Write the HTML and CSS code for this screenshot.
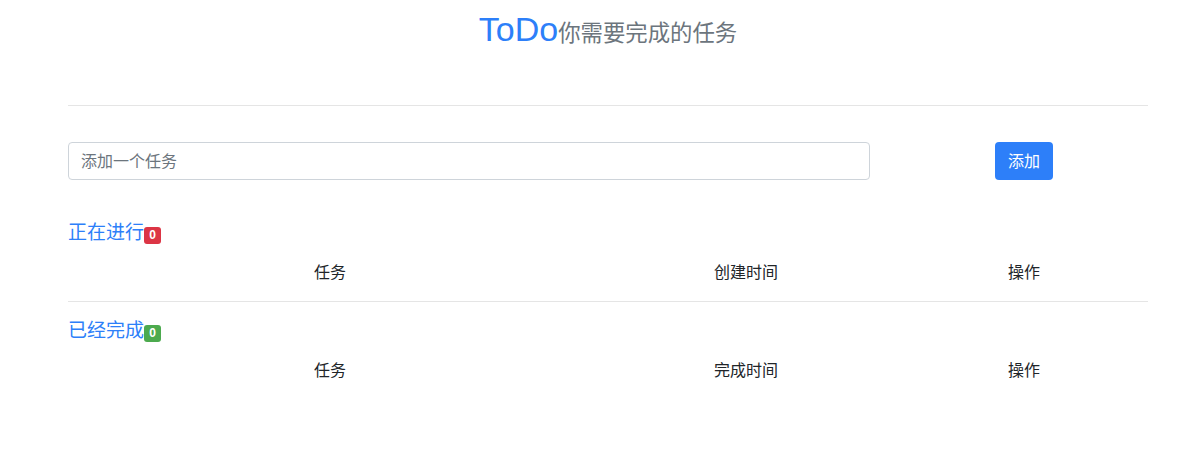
FILE: index.html
```html
<!DOCTYPE html>
<html lang="zh">
<head>
<meta charset="utf-8">
<title>ToDo</title>
<link rel="stylesheet" href="styles.css">
</head>
<body>
<div class="app">
  <header class="header">
    <h1 class="title"><span class="brand">ToDo</span><small class="subtitle">你需要完成的任务</small></h1>
  </header>
  <div class="add-row">
    <input class="task-input" type="text" placeholder="添加一个任务">
    <button class="add-btn" type="button">添加</button>
  </div>
  <section class="section section-doing">
    <h5 class="section-title">正在进行<span class="badge badge-red">0</span></h5>
    <div class="table-head">
      <div class="th">任务</div>
      <div class="th">创建时间</div>
      <div class="th">操作</div>
    </div>
  </section>
  <section class="section section-done">
    <h5 class="section-title">已经完成<span class="badge badge-green">0</span></h5>
    <div class="table-head">
      <div class="th">任务</div>
      <div class="th">完成时间</div>
      <div class="th">操作</div>
    </div>
  </section>
</div>
</body>
</html>
```
FILE: styles.css
```css
* { box-sizing: border-box; }
body {
  margin: 0;
  background: #fff;
  font-family: "Liberation Sans", "Noto Sans CJK SC", sans-serif;
  color: #212529;
}
.app {
  margin-left: 68px;
  width: 1080px;
}
.header {
  height: 106px;
  padding-top: 10px;
  border-bottom: 1px solid #e5e5e5;
}
.title {
  margin: 0;
  text-align: center;
  font-weight: normal;
  line-height: 38px;
  font-size: 34px;
}
.brand {
  color: #2d7ff9;
  font-family: "Liberation Sans", sans-serif;
  font-size: 34px;
}
.subtitle {
  color: #6c757d;
  font-size: 22.4px;
  font-family: "Noto Sans CJK SC", sans-serif;
}
.add-row {
  margin-top: 36px;
  display: grid;
  grid-template-columns: 802px 1fr;
  align-items: center;
}
.task-input {
  height: 38px;
  width: 802px;
  border: 1px solid #ced4da;
  border-radius: 4px;
  padding: 0 12px 3px;
  font-size: 16px;
  font-family: "Noto Sans CJK SC", sans-serif;
  color: #495057;
  outline: none;
}
.task-input::placeholder { color: #6c757d; }
.add-btn {
  justify-self: start;
  margin-left: 125px;
  width: 58px;
  height: 38px;
  border: none;
  border-radius: 4px;
  background: #2d7ff9;
  color: #fff;
  font-size: 16px;
  font-family: "Noto Sans CJK SC", sans-serif;
  padding: 0 0 3px;
}
.section-doing { margin-top: 39px; border-bottom: 1px solid #e5e5e5; }
.section-done { margin-top: 15px; }
.section-title {
  margin: 0;
  font-weight: normal;
  font-size: 19px;
  line-height: 23px;
  height: 23px;
  color: #2d7ff9;
  font-family: "Noto Sans CJK SC", sans-serif;
  display: flex;
  align-items: flex-end;
}
.badge {
  display: inline-block;
  width: 17px;
  height: 17px;
  margin-bottom: -2px;
  border-radius: 3px;
  color: #fff;
  font-size: 12px;
  font-weight: bold;
  line-height: 17px;
  text-align: center;
  font-family: "Liberation Sans", sans-serif;
}
.badge-red { background: #dc3545; }
.badge-green { background: #4caa4e; }
.table-head {
  margin-top: 5px;
  display: grid;
  grid-template-columns: 524px 308px 248px;
  padding: 12px 0 18px;
}
.th {
  text-align: center;
  font-size: 16px;
  line-height: 24px;
  font-family: "Noto Sans CJK SC", sans-serif;
  color: #212529;
}
```
